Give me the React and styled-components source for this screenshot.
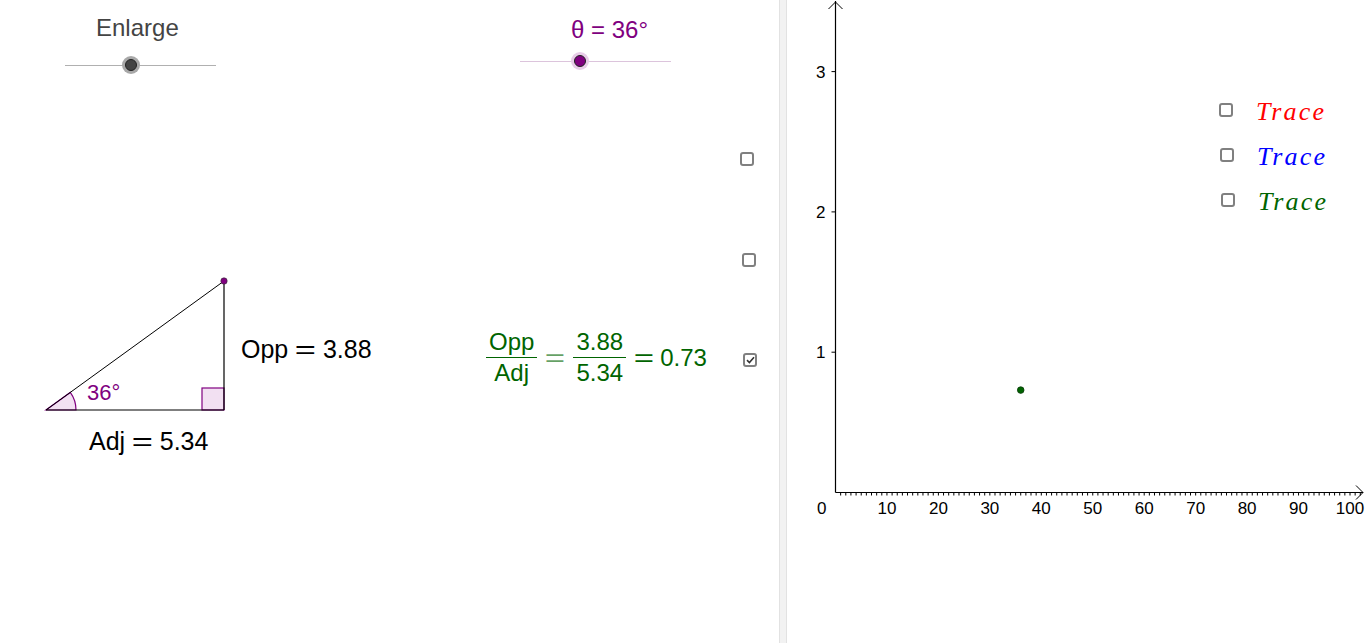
import React from "react";
import styled, { createGlobalStyle } from "styled-components";

const GlobalStyle = createGlobalStyle`
  html, body {
    margin: 0;
    padding: 0;
    background: #ffffff;
    overflow: hidden;
  }
  body {
    font-family: "Liberation Sans", Arial, sans-serif;
  }
`;

const Applet = styled.div`
  display: flex;
  width: 1366px;
  height: 643px;
  background: #ffffff;
`;

const GraphicsView = styled.div`
  position: relative;
  width: ${(p) => p.width}px;
  flex: ${(p) => (p.width ? "none" : "1")};
  height: 100%;
  overflow: hidden;
`;

const Divider = styled.div`
  width: 6px;
  height: 100%;
  background: #f2f2f2;
  border-left: 1px solid #e2e2e2;
  border-right: 1px solid #e2e2e2;
`;

// objects on the geogebra canvas sit at their own coordinates
const Item = styled.div`
  position: absolute;
  left: ${(p) => p.x}px;
  top: ${(p) => p.y}px;
`;

const Caption = styled.div`
  font-family: "Liberation Sans", Arial, sans-serif;
  font-size: ${(p) => p.size || 24}px;
  line-height: 24px;
  color: ${(p) => p.color || "#444444"};
  white-space: nowrap;
`;

const Track = styled.div`
  position: relative;
  width: ${(p) => p.length}px;
  height: 1px;
  background: ${(p) => p.color};
`;

const Knob = styled.div`
  position: absolute;
  left: ${(p) => p.at}px;
  top: 0;
  width: 12px;
  height: 12px;
  margin: -6px 0 0 -6px;
  border-radius: 50%;
  background: ${(p) => p.fill};
  border: 1px solid #222;
  box-sizing: border-box;
  box-shadow: 0 0 0 3px ${(p) => p.halo};
`;

const Box = styled.div`
  width: 14px;
  height: 14px;
  flex: none;
  box-sizing: border-box;
  border: 2px solid #808080;
  border-radius: 3px;
  background: #fff;
  display: flex;
  align-items: center;
  justify-content: center;
`;

const Latex = styled.div`
  display: flex;
  align-items: center;
  font-family: "Liberation Sans", Arial, sans-serif;
  font-size: ${(p) => p.size || 24}px;
  line-height: 26px;
  color: ${(p) => p.color || "#000"};
  white-space: nowrap;
`;

const Eq = styled.span`
  display: inline-block;
  margin: 0 ${(p) => p.gap || 9}px;
  transform: scaleX(1.45);
  opacity: ${(p) => (p.faded ? 0.6 : 1)};
`;

const Frac = styled.span`
  display: inline-flex;
  flex-direction: column;
  align-items: center;
  margin: 0 2px;
`;

const Num = styled.span`
  padding: 0 3px 3px;
  border-bottom: 1.5px solid currentColor;
  line-height: 24px;
`;

const Den = styled.span`
  padding: 3px 3px 0;
  line-height: 24px;
`;

const TraceList = styled.div`
  display: flex;
  flex-direction: column;
  gap: 15px;
`;

const TraceRow = styled.div`
  display: flex;
  align-items: center;
  gap: 23px;
  padding-left: ${(p) => p.indent || 0}px;
`;

const Trace = styled.div`
  font-family: "Liberation Serif", "Times New Roman", serif;
  font-style: italic;
  font-size: 26px;
  letter-spacing: 2.2px;
  line-height: 26px;
  margin-top: 4px;
  color: ${(p) => p.color};
`;

const Slider = ({ x, y, length, at, track, fill, halo }) => (
  <Item x={x} y={y}>
    <Track length={length} color={track}>
      <Knob at={at} fill={fill} halo={halo} />
    </Track>
  </Item>
);

const Tick = ({ checked }) => (
  <Box>
    {checked && (
      <svg width="9" height="8" viewBox="0 0 9 8">
        <path d="M1 4.2 L3.4 6.5 L8 1.2" fill="none" stroke="#333" strokeWidth="1.6" />
      </svg>
    )}
  </Box>
);

const Checkbox = ({ x, y, checked }) => (
  <Item x={x} y={y}>
    <Tick checked={checked} />
  </Item>
);

const PURPLE = "#800080";
const GREEN = "#006400";

const Triangle = () => (
  <Item x={0} y={0}>
    <svg width="300" height="460">
      <path d="M46 410 L76 410 A30 30 0 0 0 70.3 392.4 Z" fill="#f2e0f2" stroke={PURPLE} strokeWidth="1.2" />
      <rect x="202" y="388" width="22" height="22" fill="#f2e0f2" stroke={PURPLE} strokeWidth="1.2" />
      <line x1="46" y1="410" x2="224" y2="410" stroke="#000" strokeWidth="1.2" />
      <line x1="224" y1="410" x2="224" y2="281" stroke="#000" strokeWidth="1.2" />
      <line x1="46" y1="410" x2="224" y2="281" stroke="#000" strokeWidth="1" />
      <circle cx="224" cy="281" r="3.2" fill={PURPLE} stroke="#333" strokeWidth="0.6" />
    </svg>
  </Item>
);

const OX = 48.5;
const OY = 492.5;
const SX = 5.145;
const SY = 140.3;

const Axes = () => {
  const xTicks = [];
  for (let i = 1; i <= 102; i++) {
    const x = OX + i * SX;
    xTicks.push(<line key={i} x1={x} y1={OY} x2={x} y2={OY + 3} stroke="#000" strokeWidth="1" />);
  }
  const xLabels = [10, 20, 30, 40, 50, 60, 70, 80, 90, 100];
  return (
    <svg width="579" height="643" style={{ position: "absolute", left: 0, top: 0 }}>
      <line x1={OX} y1={OY} x2={OX} y2={1} stroke="#000" strokeWidth="1.2" />
      <path d={`M${OX - 7} 9 L${OX} 2 L${OX + 7} 9`} fill="none" stroke="#000" strokeWidth="1" />
      <line x1={OX} y1={OY} x2={576} y2={OY} stroke="#000" strokeWidth="1.2" />
      <path d={`M569 ${OY - 7} L576 ${OY} L569 ${OY + 7}`} fill="none" stroke="#000" strokeWidth="1" />
      {xTicks}
      {[1, 2, 3].map((n) => (
        <g key={n}>
          <line x1={OX - 4} y1={OY - n * SY} x2={OX} y2={OY - n * SY} stroke="#000" strokeWidth="1" />
          <text x={OX - 10} y={OY - n * SY + 6} textAnchor="end" fontFamily="Liberation Sans, Arial, sans-serif" fontSize="17">
            {n}
          </text>
        </g>
      ))}
      <text x={OX - 9} y={OY + 21} textAnchor="end" fontFamily="Liberation Sans, Arial, sans-serif" fontSize="17">0</text>
      {xLabels.map((n) => (
        <text key={n} x={OX + n * SX} y={OY + 21} textAnchor="middle" fontFamily="Liberation Sans, Arial, sans-serif" fontSize="17">
          {n}
        </text>
      ))}
      <circle cx={OX + 36 * SX} cy={OY - 0.73 * SY} r="3.3" fill={GREEN} stroke="#0a3a0a" strokeWidth="0.8" />
    </svg>
  );
};

export default function App() {
  return (
    <Applet>
      <GlobalStyle />
      <GraphicsView width={779}>
        <Item x={96} y={16}>
          <Caption>Enlarge</Caption>
        </Item>
        <Slider x={65} y={65} length={151} at={66} track="#b0b0b0" fill="#444" halo="#a8a8a8" />

        <Item x={571} y={18}>
          <Caption color={PURPLE}>θ = 36°</Caption>
        </Item>
        <Slider x={520} y={61} length={151} at={60} track="#dcc4dc" fill={PURPLE} halo="#e8cce8" />

        <Checkbox x={740} y={152} />
        <Checkbox x={742} y={253} />
        <Checkbox x={743} y={353} checked />

        <Triangle />
        <Item x={87} y={381}>
          <Caption color={PURPLE} size={22}>36°</Caption>
        </Item>

        <Item x={241} y={336}>
          <Latex size={25}>
            Opp<Eq gap={10}>=</Eq>3.88
          </Latex>
        </Item>
        <Item x={89} y={428}>
          <Latex size={25}>
            Adj<Eq gap={10}>=</Eq>5.34
          </Latex>
        </Item>

        <Item x={484} y={330}>
          <Latex color={GREEN}>
            <Frac>
              <Num>Opp</Num>
              <Den>Adj</Den>
            </Frac>
            <Eq faded>=</Eq>
            <Frac>
              <Num>3.88</Num>
              <Den>5.34</Den>
            </Frac>
            <Eq>=</Eq>0.73
          </Latex>
        </Item>
      </GraphicsView>
      <Divider />
      <GraphicsView>
        <Axes />
        <Item x={432} y={95}>
          <TraceList>
            <TraceRow>
              <Tick />
              <Trace color="#ff0000">Trace</Trace>
            </TraceRow>
            <TraceRow indent={1}>
              <Tick />
              <Trace color="#0000ff">Trace</Trace>
            </TraceRow>
            <TraceRow indent={2}>
              <Tick />
              <Trace color={GREEN}>Trace</Trace>
            </TraceRow>
          </TraceList>
        </Item>
      </GraphicsView>
    </Applet>
  );
}
